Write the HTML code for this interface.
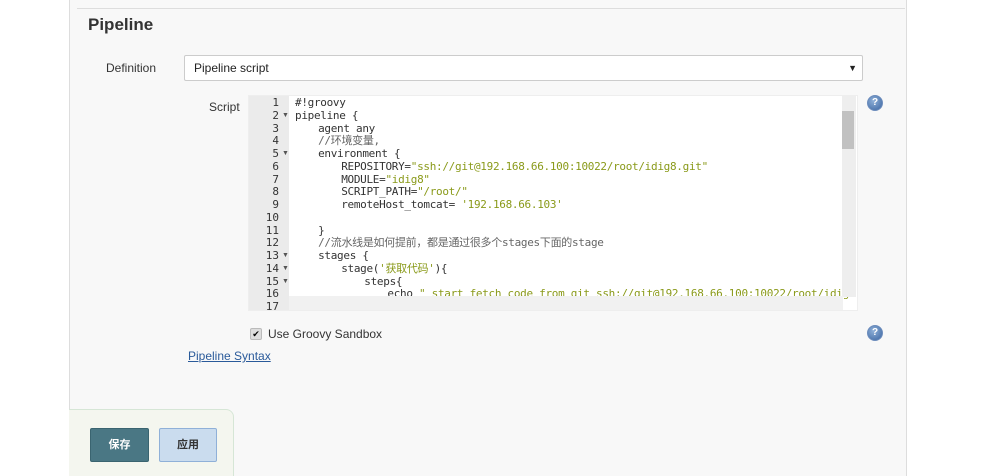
<!DOCTYPE html>
<html><head><meta charset="utf-8"><style>
html,body{margin:0;width:1000px;height:476px;overflow:hidden;}
body{background:#fff;position:relative;font-family:"Liberation Sans","Noto Sans CJK SC",sans-serif;}
.panel{position:absolute;left:69px;top:0;width:836px;height:476px;background:#f8f8f8;border-left:1px solid #ddd;border-right:1px solid #ddd;}
.topline{position:absolute;left:77px;top:8px;width:828px;height:1px;background:#ddd;}
h2{position:absolute;left:88px;top:15px;margin:0;font-size:17px;font-weight:bold;color:#333;}
.lbl{position:absolute;font-size:12px;color:#333;}
.sel{position:absolute;left:184px;top:55px;background:#fff;border:1px solid #ccc;border-radius:2px;font-size:12px;line-height:24px;box-sizing:border-box;width:679px;height:26px;padding-left:9px;color:#222;}
.sel span{position:absolute;right:5px;top:0;font-size:9px;}
.ed{position:absolute;left:248px;top:95px;width:610px;height:216px;background:#fff;border:1px solid #eee;box-sizing:border-box;overflow:hidden;}
.gut{position:absolute;left:0;top:0;width:40px;height:216px;background:#ebebeb;}
.ln{position:absolute;left:0;width:30px;text-align:right;font:11px/12.75px "DejaVu Sans Mono","Liberation Mono","Noto Sans CJK SC",monospace;color:#333;}
.code{position:absolute;left:46px;top:1px;font:11px/12.75px "DejaVu Sans Mono","Liberation Mono","Noto Sans CJK SC",monospace;color:#333;white-space:pre;letter-spacing:-0.85px}
.code b{font-weight:normal;letter-spacing:-0.3px}
.s{color:#8a9a1a}.c{color:#666}
.vs{position:absolute;right:1px;top:0;width:14px;height:201px;background:#eee;}
.th{position:absolute;right:2px;top:15px;width:12px;height:38px;background:#c1c1c1;}
.hs{position:absolute;left:40px;bottom:0;width:554px;height:14px;background:#f1f1f1;}
.help{position:absolute;width:14px;height:14px;border-radius:50%;background:radial-gradient(circle at 40% 35%,#8fb0d8,#3a64a0);border:1px solid #6c8cbc;color:#fff;font:bold 10px/14px "Liberation Sans";text-align:center;}
.chk{position:absolute;left:250px;top:328px;width:10px;height:10px;background:#ddd;border:1px solid #bbb;border-radius:2px;font-size:9px;line-height:10px;text-align:center;}
a{position:absolute;left:188px;top:349px;font-size:12px;color:#2a5a9a;text-decoration:underline;}
.bar{position:absolute;left:69px;top:409px;width:164px;height:80px;background:#f4f6ef;border:1px solid #d6e6d6;border-left:none;border-radius:0 8px 0 0;}
.b{position:absolute;top:428px;height:34px;box-sizing:border-box;border-radius:2px;font-size:11px;font-weight:bold;text-align:center;line-height:32px;}
</style></head><body>
<div class="panel"></div><div class="topline"></div>
<h2>Pipeline</h2>
<div class="lbl" style="left:106px;top:61px">Definition</div>
<div class="sel">Pipeline script<span>▼</span></div>
<div class="lbl" style="left:209px;top:100px">Script</div>
<div class="ed"><div class="gut"></div>
<div class="ln" style="top:1px">1<br>2<br>3<br>4<br>5<br>6<br>7<br>8<br>9<br>10<br>11<br>12<br>13<br>14<br>15<br>16<br>17</div>
<div style="position:absolute;left:33px;top:1px;font:7px/12.75px sans-serif;color:#555">&nbsp;<br>▼<br>&nbsp;<br>&nbsp;<br>▼<br>&nbsp;<br>&nbsp;<br>&nbsp;<br>&nbsp;<br>&nbsp;<br>&nbsp;<br>&nbsp;<br>▼<br>▼<br>▼</div>
<div class="code"><b>#!groovy</b>
<b>pipeline {</b>
    <b>agent any</b>
    <b class="c">//环境变量,</b>
    <b>environment {</b>
        <b>REPOSITORY=<span class="s">"ssh://git@192.168.66.100:10022/root/idig8.git"</span></b>
        <b>MODULE=<span class="s">"idig8"</span></b>
        <b>SCRIPT_PATH=<span class="s">"/root/"</span></b>
        <b>remoteHost_tomcat= <span class="s">'192.168.66.103'</span></b>

    <b>}</b>
    <b class="c">//流水线是如何提前，都是通过很多个stages下面的stage</b>
    <b>stages {</b>
        <b>stage(<span class="s">'获取代码'</span>){</b>
            <b>steps{</b>
                <b>echo <span class="s">" start fetch code from git ssh://git@192.168.66.100:10022/root/idig8.git</span></b>
</div>
<div class="vs"><div class="th"></div></div>
<div class="hs"></div>
</div>
<div class="help" style="left:867px;top:95px">?</div>
<div class="help" style="left:867px;top:325px">?</div>
<div class="chk">✔</div>
<div class="lbl" style="left:268px;top:327px">Use Groovy Sandbox</div>
<a>Pipeline Syntax</a>
<div class="bar"></div>
<div class="b" style="left:90px;width:59px;background:#4a7784;border:1px solid #3a6470;color:#fff">保存</div>
<div class="b" style="left:159px;width:58px;background:#cadcee;border:1px solid #8fb0d8;color:#333">应用</div>
</body></html>
